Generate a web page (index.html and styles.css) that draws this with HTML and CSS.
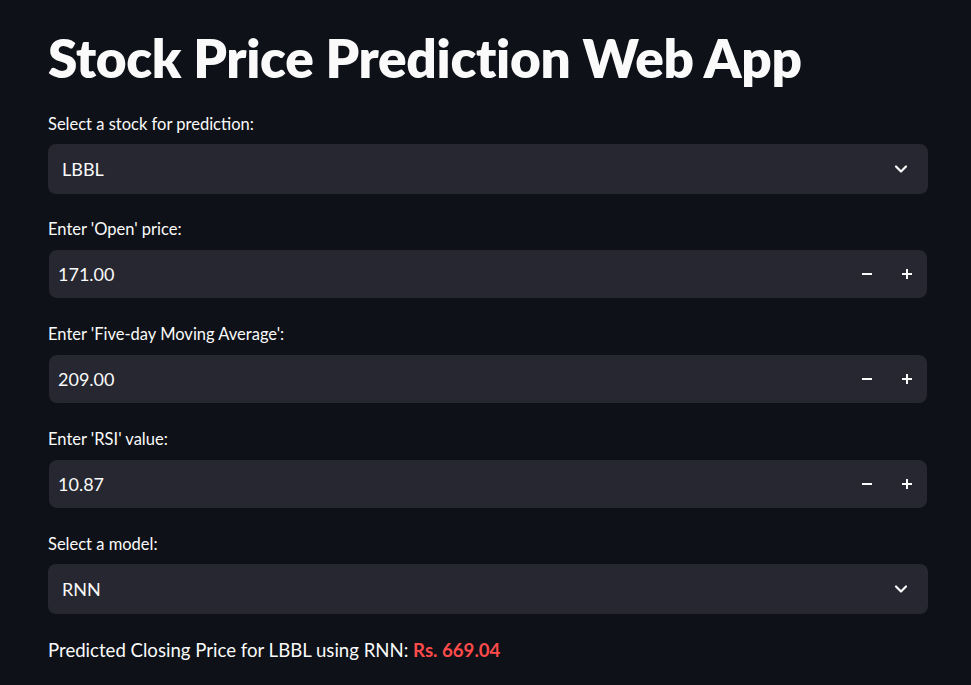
FILE: index.html
```html
<!DOCTYPE html>
<html>
<head>
<meta charset="utf-8">
<link rel="stylesheet" href="styles.css">
</head>
<body>
<main class="app">
  <h1 class="title">Stock Price Prediction Web App</h1>

  <div class="field">
    <div class="label">Select a stock for prediction:</div>
    <div class="select">
      <span class="value">LBBL</span>
      <svg class="chev" width="14" height="14" viewBox="0 0 14 14"><path d="M2 4.5 L7 9.5 L12 4.5" fill="none" stroke="#fafafa" stroke-width="2.2" stroke-linecap="round" stroke-linejoin="round"/></svg>
    </div>
  </div>

  <div class="field">
    <div class="label">Enter 'Open' price:</div>
    <div class="number">
      <span class="value">171.00</span>
      <span class="steps">
        <span class="step"><svg width="12" height="12" viewBox="0 0 12 12"><rect x="1" y="5" width="10" height="2" fill="#fafafa"/></svg></span>
        <span class="step"><svg width="12" height="12" viewBox="0 0 12 12"><rect x="1" y="5" width="10" height="2" fill="#fafafa"/><rect x="5" y="1" width="2" height="10" fill="#fafafa"/></svg></span>
      </span>
    </div>
  </div>

  <div class="field">
    <div class="label">Enter 'Five-day Moving Average':</div>
    <div class="number">
      <span class="value">209.00</span>
      <span class="steps">
        <span class="step"><svg width="12" height="12" viewBox="0 0 12 12"><rect x="1" y="5" width="10" height="2" fill="#fafafa"/></svg></span>
        <span class="step"><svg width="12" height="12" viewBox="0 0 12 12"><rect x="1" y="5" width="10" height="2" fill="#fafafa"/><rect x="5" y="1" width="2" height="10" fill="#fafafa"/></svg></span>
      </span>
    </div>
  </div>

  <div class="field">
    <div class="label">Enter 'RSI' value:</div>
    <div class="number">
      <span class="value">10.87</span>
      <span class="steps">
        <span class="step"><svg width="12" height="12" viewBox="0 0 12 12"><rect x="1" y="5" width="10" height="2" fill="#fafafa"/></svg></span>
        <span class="step"><svg width="12" height="12" viewBox="0 0 12 12"><rect x="1" y="5" width="10" height="2" fill="#fafafa"/><rect x="5" y="1" width="2" height="10" fill="#fafafa"/></svg></span>
      </span>
    </div>
  </div>

  <div class="field">
    <div class="label">Select a model:</div>
    <div class="select">
      <span class="value">RNN</span>
      <svg class="chev" width="14" height="14" viewBox="0 0 14 14"><path d="M2 4.5 L7 9.5 L12 4.5" fill="none" stroke="#fafafa" stroke-width="2.2" stroke-linecap="round" stroke-linejoin="round"/></svg>
    </div>
  </div>

  <p class="result">Predicted Closing Price for LBBL using RNN: <span class="price">Rs. 669.04</span></p>
</main>
</body>
</html>
```
FILE: styles.css
```css
html, body {
  margin: 0;
  padding: 0;
  background: #0e1117;
  color: #fafafa;
  font-family: Lato, "Noto Sans", sans-serif;
}
.app {
  width: 880px;
  padding: 0 43px 0 48px;
  display: flex;
  flex-direction: column;
}
.title {
  margin: 0;
  height: 114px;
  padding-top: 25px;
  box-sizing: border-box;
  font-size: 53.1px;
  font-weight: 800;
  line-height: 66px;
  letter-spacing: -0.3px;
}
.field {
  display: flex;
  flex-direction: column;
  margin-bottom: 25px;
}
.label {
  font-size: 16.5px;
  line-height: 21px;
  height: 21px;
  margin-bottom: 9px;
}
.select, .number {
  height: 50px;
  box-sizing: border-box;
  background: #262730;
  border-radius: 8px;
  display: flex;
  align-items: center;
}
.select {
  padding: 0 20px 0 14px;
  justify-content: space-between;
}
.number {
  border: 1px solid #0e1117;
  border-radius: 9px;
  padding: 0 0 0 9px;
  justify-content: space-between;
}
.value {
  font-size: 18px;
}
.steps {
  display: flex;
}
.step {
  width: 40px;
  height: 46px;
  display: flex;
  align-items: center;
  justify-content: center;
}
.chev {
  display: block;
}
.result {
  margin: -2px 0 0;
  font-size: 18.6px;
  line-height: 27px;
}
.price {
  color: #ff4b4b;
  font-weight: 700;
}
```
